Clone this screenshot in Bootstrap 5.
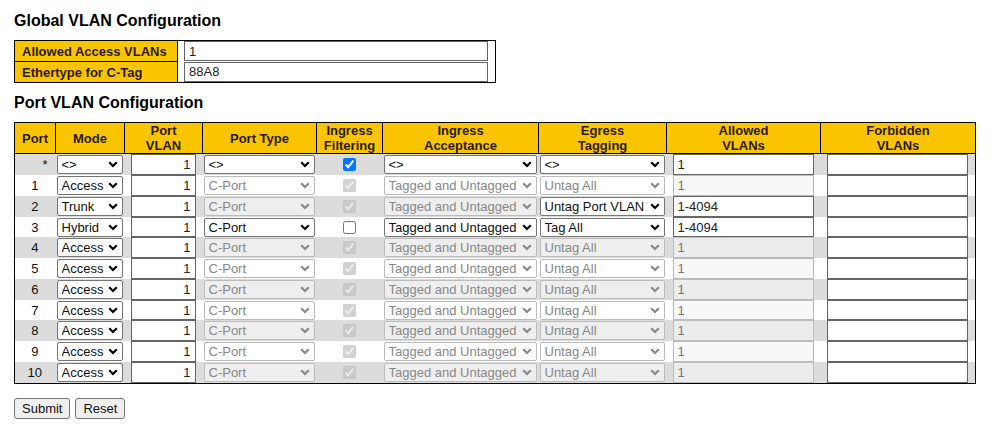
<!DOCTYPE html>
<html lang="en">
<head>
<meta charset="utf-8">
<meta name="viewport" content="width=device-width, initial-scale=1">
<title>VLAN Configuration</title>
<link rel="stylesheet" href="https://cdn.jsdelivr.net/npm/bootstrap@5.3.0/dist/css/bootstrap.min.css">
<style>
body { font: 13px/15px "Liberation Sans", Arial, sans-serif; color: #111; background: #fff; }
.page { padding: 12px 25px 14px 14px; }
h1 { font-size: 16px; line-height: 17px; font-weight: 700; color: #000; margin: 0 0 11px; }
.grid-table { border-collapse: collapse; border: 1px solid #000; }
.grid-table th { background: #fbc400; border: 1px solid #000; color: #2b1a00; padding: 0; }
.grid-table td { padding: 0 2px 0 1px; vertical-align: middle; }
.grid-table td.inset { padding: 0 7px 0 6px; }
.global-table { width: 482px; max-width: 100%; margin-bottom: 11px; }
.global-table th { width: 163px; padding: 0 7px; }
.global-table tr { height: 21px; }
.global-table input[type=text] { height: 20px; }
.port-table { table-layout: fixed; }
.port-table thead th { height: 31px; text-align: center; vertical-align: middle; }
.port-table tbody tr { height: 21px; }
.port-table tbody tr:nth-child(4n) { height: 20px; }
.port-table tbody tr:nth-child(4n) input[type=text] { height: 20px; }
.port-table tbody tr:nth-child(odd) { background: #dcdcdc; }
input[type=text] { display: block; width: 100%; height: 21px; padding: 0 4px; border: 1px solid #666; background: #fff; color: #222; border-radius: 0; }
input[type=text]:disabled { background: rgba(255,255,255,.45); border-color: #bbb; color: #777; }
tr:nth-child(even) input[type=text]:disabled { background: #f8f8f8; }
select { appearance: none; display: block; width: 100%; height: 19px; padding: 0 14px 0 4px; border: 1px solid #767676; border-radius: 2px; color: #111;
  background: #fff url("data:image/svg+xml,%3Csvg xmlns='http://www.w3.org/2000/svg' width='10' height='7'%3E%3Cpath d='M1.2 1.2 5 5 8.8 1.2' fill='none' stroke='%23000' stroke-width='2.2'/%3E%3C/svg%3E") no-repeat right 4px center; }
select:disabled { background-color: rgba(255,255,255,.5); border-color: #bbb; color: #888; opacity: 1;
  background-image: url("data:image/svg+xml,%3Csvg xmlns='http://www.w3.org/2000/svg' width='10' height='7'%3E%3Cpath d='M1.2 1.2 5 5 8.8 1.2' fill='none' stroke='%23888' stroke-width='2.2'/%3E%3C/svg%3E"); }
input[type=checkbox] { display: block; width: 13px; height: 13px; margin: 0 auto; }
.actions { margin-top: 14px; gap: 5px; }
.action { height: 21px; padding: 0 7px; border: 1px solid #767676; border-radius: 3px; background: #efefef; color: #111; line-height: 17px; }
</style>
</head>
<body>
<main class="page w-100">
  <form>
    <h1>Global VLAN Configuration</h1>
    <table class="grid-table global-table">
      <tbody>
        <tr><th scope="row"><label for="access">Allowed Access VLANs</label></th><td class="inset"><input type="text" id="access" value="1"></td></tr>
        <tr><th scope="row"><label for="ether">Ethertype for C-Tag</label></th><td class="inset"><input type="text" id="ether" value="88A8"></td></tr>
      </tbody>
    </table>
    <h1>Port VLAN Configuration</h1>
    <table class="grid-table port-table w-100">
      <colgroup>
        <col style="width:41px"><col style="width:69px"><col style="width:78px"><col style="width:114px"><col style="width:66px"><col style="width:156px"><col style="width:128px"><col style="width:154px"><col style="width:155px">
      </colgroup>
      <thead>
        <tr><th>Port</th><th>Mode</th><th>Port<br>VLAN</th><th>Port Type</th><th>Ingress<br>Filtering</th><th>Ingress<br>Acceptance</th><th>Egress<br>Tagging</th><th>Allowed<br>VLANs</th><th>Forbidden<br>VLANs</th></tr>
      </thead>
      <tbody id="ports"></tbody>
    </table>
    <div class="d-flex actions">
      <button type="button" class="action">Submit</button>
      <button type="reset" class="action">Reset</button>
    </div>
  </form>
</main>
<script src="https://cdn.jsdelivr.net/npm/bootstrap@5.3.0/dist/js/bootstrap.bundle.min.js"></script>
<script>
const base = { mode: 'Access', type: 'C-Port', accept: 'Tagged and Untagged', egress: 'Untag All', allowed: '1', filter: true, open: [] };
const special = {
  '*': { mode: '<>', type: '<>', accept: '<>', egress: '<>', open: ['type', 'filter', 'accept', 'egress', 'allowed'] },
  '2': { mode: 'Trunk', egress: 'Untag Port VLAN', allowed: '1-4094', open: ['egress', 'allowed'] },
  '3': { mode: 'Hybrid', egress: 'Tag All', allowed: '1-4094', filter: false, open: ['type', 'filter', 'accept', 'egress', 'allowed'] }
};
const esc = s => s.replace(/</g, '&lt;').replace(/>/g, '&gt;');
document.getElementById('ports').innerHTML = ['*', 1, 2, 3, 4, 5, 6, 7, 8, 9, 10].map(port => {
  const p = { ...base, ...special[port] };
  const off = k => p.open.includes(k) ? '' : ' disabled';
  const pick = (k, name, state) => `<td><select aria-label="${name}, port ${port}"${state}><option>${esc(p[k])}</option></select></td>`;
  return `<tr><td class="${port === '*' ? 'text-end pe-2' : 'text-center'}">${port}</td>`
    + pick('mode', 'Mode', '')
    + `<td class="inset"><input type="text" class="text-end" aria-label="Port VLAN, port ${port}" value="1"></td>`
    + pick('type', 'Port type', off('type'))
    + `<td><input type="checkbox" aria-label="Ingress filtering, port ${port}"${p.filter ? ' checked' : ''}${off('filter')}></td>`
    + pick('accept', 'Ingress acceptance', off('accept'))
    + pick('egress', 'Egress tagging', off('egress'))
    + `<td class="inset"><input type="text" aria-label="Allowed VLANs, port ${port}" value="${p.allowed}"${off('allowed')}></td>`
    + `<td class="inset"><input type="text" aria-label="Forbidden VLANs, port ${port}"></td></tr>`;
}).join('');
</script>
</body>
</html>
